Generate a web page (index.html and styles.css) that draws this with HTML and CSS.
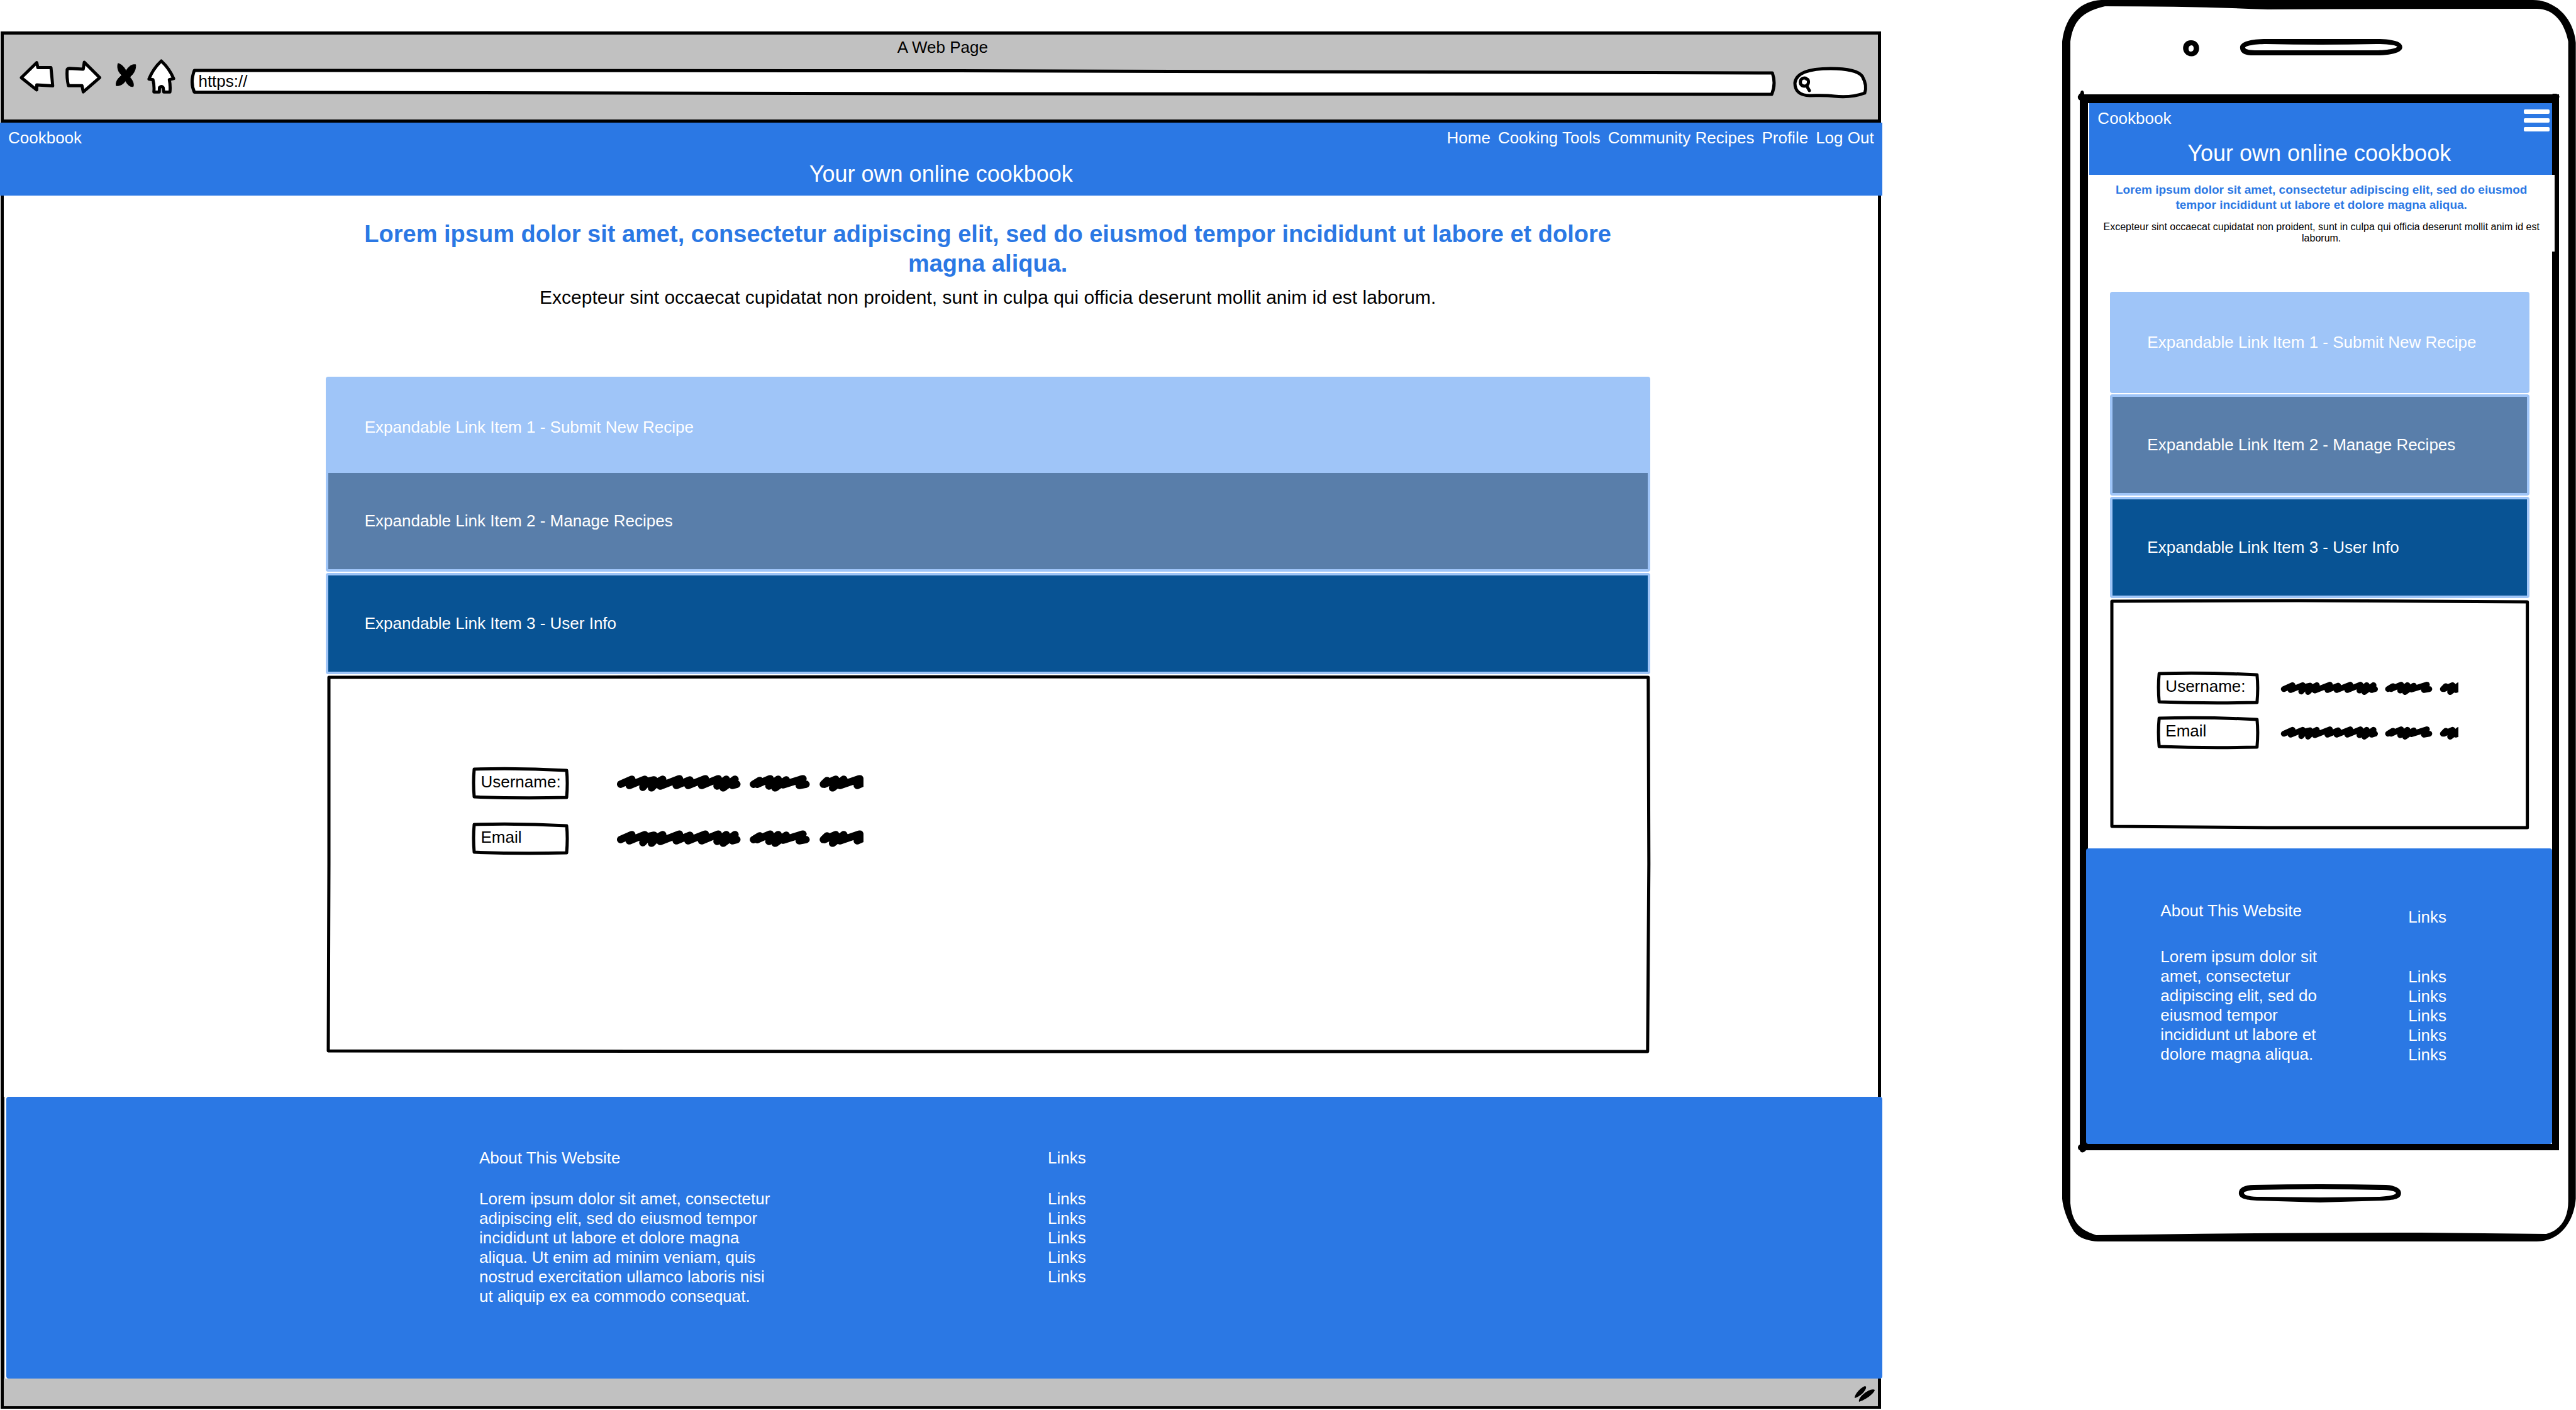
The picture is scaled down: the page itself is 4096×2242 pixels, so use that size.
FILE: index.html
```html
<!DOCTYPE html>
<html lang="en">
<head>
<meta charset="utf-8">
<title>Cookbook</title>
<link rel="stylesheet" href="styles.css">
</head>
<body>
<svg class="defs" aria-hidden="true">
  <symbol id="scribble" viewBox="0 0 400 27" preserveAspectRatio="xMinYMid slice">
    <path fill="none" stroke="#000" stroke-width="12" stroke-linecap="round" stroke-linejoin="round" d="M7 15L25 7 21 17 46 7 43 20 52 10 61 8 57 21 66 12 75 7 71 18 102 6 97 17 119 8 116 17 144 6 138 17 165 6 163 18 178 7 173 21 192 7 188 17 195 15M222 15L232 9 228 15 249 6 247 18 262 7 257 21 275 8 270 16 302 6 296 17 307 15M335 15L341 9 337 15 355 7 350 21 368 7 362 17 394 6 390 17 410 8"/>
  </symbol>
</svg>
<div class="mockups">
  <section class="browser">
    <div class="chrome">
      <div class="chrome-title">A Web Page</div>
      <div class="toolbar">
        <div class="toolbar-buttons">
          <button type="button" aria-label="Back"><svg class="icon-back" viewBox="28 94 69 58"><path d="M34 125L59 100.700L60.700 108.700L82 108.700L84.800 138.300L59 136.700V145Z"/></svg></button>
          <button type="button" aria-label="Forward"><svg class="icon-forward" viewBox="97 94 77 58"><path d="M108 112Q109 110 112 110L134 111.300L135.700 100L160.700 125L134 148L132 138H110Q107 125 108 112Z"/></svg></button>
          <button type="button" aria-label="Stop"><svg class="icon-stop" viewBox="174 94 56 58"><path d="M191 102C196 103 201 108 204 114C208 107 213 103 219.500 104C220 112 217 118 210 124C215 130 217 135 215.500 139.500C210 140 206 136 203 130C200 135 195 138.500 188 138C187 132 190 127 197 121C191 116 189 108 191 102Z"/></svg></button>
          <button type="button" aria-label="Home"><svg class="icon-home" viewBox="230 94 61 58"><path d="M260 98Q273 110 280 126.500L273 128.300Q275 138 274 148.300H264L263 141Q260 138 257 141L256.700 148.300H248Q249 138 246.500 128.300L240 127.300Q247 110 260 98Z"/></svg></button>
        </div>
        <div class="inked address">
          <svg class="ink" viewBox="0 0 2520 44" preserveAspectRatio="none" aria-hidden="true"><path d="M7 3L1200 3.500L2514 7Q2520 24 2513 41L1200 40L7 37.500Q0 22 7 3Z"/></svg>
          <input type="text" aria-label="Address" value="https://">
        </div>
        <div class="inked search">
          <svg class="ink" viewBox="0 0 119 50" preserveAspectRatio="none" aria-hidden="true"><path d="M27 46C10 46 3 38 3 26C5 8 30 3 60 3C85 3 104 7 110 15C115 24 117 34 114 42C100 47 85 49 66 47C50 45 40 46 27 46Z"/><path class="glass" d="M22 20C26 20 26 31 18 31C9 31 10 18 18 18Q21 18 22 20M22 31L26 38"/></svg>
          <input type="search" aria-label="Search">
        </div>
      </div>
    </div>

    <header class="site-header">
      <div class="bar">
        <a href="#" class="brand">Cookbook</a>
        <nav class="menu">
          <a href="#">Home</a>
          <a href="#">Cooking Tools</a>
          <a href="#">Community Recipes</a>
          <a href="#">Profile</a>
          <a href="#">Log Out</a>
        </nav>
      </div>
      <h1>Your own online cookbook</h1>
    </header>

    <main class="page">
      <div class="intro">
        <h2>Lorem ipsum dolor sit amet, consectetur adipiscing elit, sed do eiusmod tempor incididunt ut labore et dolore<br>magna aliqua.</h2>
        <p>Excepteur sint occaecat cupidatat non proident, sunt in culpa qui officia deserunt mollit anim id est laborum.</p>
      </div>
      <div class="accordion">
        <button type="button" class="item light">Expandable Link Item 1 - Submit New Recipe</button>
        <button type="button" class="item slate">Expandable Link Item 2 - Manage Recipes</button>
        <button type="button" class="item navy">Expandable Link Item 3 - User Info</button>
        <dl class="inked panel">
          <svg class="ink" viewBox="0 0 2105 601" preserveAspectRatio="none" aria-hidden="true"><path d="M5 3L1000 2L2102 3L2103 300L2101 599L900 599L4 598L5 300Z"/></svg>
          <div class="field">
            <dt class="inked"><svg class="ink" viewBox="0 0 153 52" preserveAspectRatio="none" aria-hidden="true"><path d="M3 3Q75 1 150 5Q152 25 150 49Q75 51 3 48Q1 25 3 3Z"/></svg><span>Username:</span></dt>
            <dd><svg class="scribble" viewBox="0 0 400 27" role="img" aria-label="Hidden user name"><use href="#scribble" width="400" height="27"/></svg></dd>
          </div>
          <div class="field">
            <dt class="inked"><svg class="ink" viewBox="0 0 153 52" preserveAspectRatio="none" aria-hidden="true"><path d="M3 3Q75 1 150 5Q152 25 150 49Q75 51 3 48Q1 25 3 3Z"/></svg><span>Email</span></dt>
            <dd><svg class="scribble" viewBox="0 0 400 27" role="img" aria-label="Hidden email"><use href="#scribble" width="400" height="27"/></svg></dd>
          </div>
        </dl>
      </div>
    </main>

    <div class="footer-frame">
      <footer class="site-footer">
        <div class="about">
          <h3>About This Website</h3>
          <p>Lorem ipsum dolor sit amet, consectetur adipiscing elit, sed do eiusmod tempor incididunt ut labore et dolore magna aliqua. Ut enim ad minim veniam, quis nostrud exercitation ullamco laboris nisi ut aliquip ex ea commodo consequat.</p>
        </div>
        <div class="links">
          <h3>Links</h3>
          <ul>
            <li><a href="#">Links</a></li>
            <li><a href="#">Links</a></li>
            <li><a href="#">Links</a></li>
            <li><a href="#">Links</a></li>
            <li><a href="#">Links</a></li>
          </ul>
        </div>
      </footer>
    </div>
    <div class="status-bar">
      <svg class="grip" viewBox="0 0 32 25" aria-hidden="true"><path d="M0 19C0 12 11 1 17 0C22 3 10 17 0 19ZM7 25C5 17 25 2 32 6C31 12 17 22 7 25Z"/></svg>
    </div>
  </section>

  <section class="phone">
    <svg class="phone-body" viewBox="0 0 817 1974" preserveAspectRatio="none" aria-hidden="true">
      <path fill-rule="evenodd" d="M0 66C4 30 25 2 62 0H749C785 0 814 30 817 68V1906C814 1945 790 1974 755 1974H68C45 1975 25 1970 17 1955C8 1940 1 1920 0 1906ZM13 66V1913C16 1945 28 1955 54 1964Q300 1960 570 1960L770 1962C795 1955 805 1935 805 1910V66C800 40 785 14 755 14Q543 14 327 15Q210 10 68 10C35 18 18 30 13 66Z"/>
      <path fill-rule="evenodd" d="M205 64C222 64 222 89 206 89.500C188 89 188 64 205 64ZM206 72C199 72 200 83 205 82C211 82 210 72 206 72Z"/>
      <path fill-rule="evenodd" d="M325 62H500C525 62 541 66 541 75C541 83 525 88 500 88H303C288 88 283 83 283 75C284 66 300 62 325 62ZM325 70C305 70 291 73 291 76C292 79 300 80 310 80H500C515 80 533 77 533 74C528 71 515 70 500 70Q410 72 325 70Z"/>
      <path fill-rule="evenodd" d="M305 1884Q410 1882 515 1884C530 1885 539 1890 539 1897C539 1906 530 1908 510 1909L410 1912L310 1909C290 1908 281 1905 281 1897C281 1889 290 1884 305 1884ZM305 1892C295 1893 289 1895 289 1897C290 1901 300 1903 315 1903L410 1904L505 1903C520 1902 531 1900 531 1897C531 1894 520 1892 505 1892Q410 1890 305 1892Z"/>
      <path d="M25 153Q27 149 29 148C29 143 35 142 35 150V160H29Q24 158 25 153ZM786 149Q794 152 789 158H780V149ZM25 1824Q26 1820 29 1820H38V1829Q31 1836 28 1829Q25 1828 25 1824Z"/>
    </svg>
    <div class="screen">
      <header class="site-header">
        <div class="bar">
          <a href="#" class="brand">Cookbook</a>
          <button type="button" class="hamburger" aria-label="Menu"><span></span><span></span><span></span></button>
        </div>
        <h1>Your own online cookbook</h1>
      </header>
      <div class="intro">
        <h2>Lorem ipsum dolor sit amet, consectetur adipiscing elit, sed do eiusmod<br>tempor incididunt ut labore et dolore magna aliqua.</h2>
        <p>Excepteur sint occaecat cupidatat non proident, sunt in culpa qui officia deserunt mollit anim id est<br>laborum.</p>
      </div>
      <div class="accordion">
        <button type="button" class="item light">Expandable Link Item 1 - Submit New Recipe</button>
        <button type="button" class="item slate">Expandable Link Item 2 - Manage Recipes</button>
        <button type="button" class="item navy">Expandable Link Item 3 - User Info</button>
        <dl class="inked panel">
          <svg class="ink" viewBox="0 0 667 365" preserveAspectRatio="none" aria-hidden="true"><path d="M3 3L300 2L664 4V180L664 363L250 363L3 361Z"/></svg>
          <div class="field">
            <dt class="inked"><svg class="ink" viewBox="0 0 153 52" preserveAspectRatio="none" aria-hidden="true"><path d="M3 3Q75 1 150 5Q152 25 150 49Q75 51 3 48Q1 25 3 3Z"/></svg><span>Username:</span></dt>
            <dd><svg class="scribble" viewBox="0 0 367 27" role="img" aria-label="Hidden user name"><use href="#scribble" width="400" height="27"/></svg></dd>
          </div>
          <div class="field">
            <dt class="inked"><svg class="ink" viewBox="0 0 153 52" preserveAspectRatio="none" aria-hidden="true"><path d="M3 3Q75 1 150 5Q152 25 150 49Q75 51 3 48Q1 25 3 3Z"/></svg><span>Email</span></dt>
            <dd><svg class="scribble" viewBox="0 0 367 27" role="img" aria-label="Hidden email"><use href="#scribble" width="400" height="27"/></svg></dd>
          </div>
        </dl>
      </div>
      <footer class="site-footer">
        <div class="about">
          <h3>About This Website</h3>
          <p>Lorem ipsum dolor sit amet, consectetur adipiscing elit, sed do eiusmod tempor incididunt ut labore et dolore magna aliqua.</p>
        </div>
        <div class="links">
          <h3>Links</h3>
          <ul>
            <li><a href="#">Links</a></li>
            <li><a href="#">Links</a></li>
            <li><a href="#">Links</a></li>
            <li><a href="#">Links</a></li>
            <li><a href="#">Links</a></li>
          </ul>
        </div>
      </footer>
    </div>
  </section>
</div>
</body>
</html>
```
FILE: styles.css
```css
* { box-sizing: border-box; }

body, h1, h2, h3, p, ul, dl, dd { margin: 0; padding: 0; }

body {
  background: #fff;
  color: #000;
  font: 26px/31px "Liberation Sans", Arial, sans-serif;
}

a { color: inherit; text-decoration: none; }
ul { list-style: none; }
h1, h3 { font-weight: 400; }
h3 { font-size: 26px; }
button, input { font: inherit; color: inherit; padding: 0; border: 0; background: none; }
.defs { display: none; }

.mockups {
  display: grid;
  grid-template-columns: 2994fr 817fr;
  column-gap: 7%;
  align-items: start;
}

/* Hand-drawn outlines, stretched behind the box they belong to */
.inked { position: relative; }
.ink { position: absolute; inset: 0; width: 100%; height: 100%; overflow: visible; }
.ink path { fill: #fff; stroke: #000; stroke-width: 5px; stroke-linejoin: round; vector-effect: non-scaling-stroke; }
.ink .glass { stroke-linecap: round; }

/* Browser window */
.browser { padding-top: 50px; }

.chrome {
  margin: 0 2px 0 1px;
  padding: 5px 16px 34px 22px;
  background: #c1c1c1;
  border: 5px solid #000;
}
.chrome-title { text-align: center; line-height: 30px; }
.toolbar { display: flex; align-items: flex-start; padding-top: 3px; }
.toolbar-buttons { display: flex; margin-right: 16px; }
.toolbar-buttons svg { display: block; height: 57px; }
.toolbar-buttons path { fill: #fff; stroke: #000; stroke-width: 5; stroke-linejoin: round; }
.toolbar-buttons .icon-stop path { fill: #000; stroke-width: 1; }
.address { flex: 1; height: 44px; margin: 16px 26px 0 0; }
.address input { position: relative; display: block; width: 100%; height: 40px; padding-left: 13px; }
.search { width: 119px; height: 50px; margin-top: 13px; }
.search input { position: relative; display: block; width: 100%; height: 50px; padding: 0 12px 0 32px; }

.site-header { padding: 9px 13px 14px; background: #2b78e4; color: #fff; }
.bar { display: flex; justify-content: space-between; }
.menu { display: flex; gap: 12px; }
h1 { margin-top: 22px; text-align: center; font-size: 36px; line-height: 40px; }

.page {
  margin: 0 2px 0 1px;
  padding: 38px 12.1% 70px 17.1%;
  border: solid #000;
  border-width: 0 5px;
}
.intro { text-align: center; }
.intro h2 { color: #2b78e4; font-size: 38px; line-height: 47px; white-space: nowrap; }
.intro p { margin-top: 12px; font-size: 30px; line-height: 36px; white-space: nowrap; }

.accordion { display: flex; flex-direction: column; gap: 2px; margin-top: 108px; }
.item {
  height: 161px;
  padding: 0 58px;
  border: 4px solid #9fc5f8;
  border-radius: 4px;
  color: #fff;
  text-align: left;
}
.light { background: #9fc5f8; }
.slate { background: #597eaa; }
.navy { background: #085394; }
.page .light { margin-bottom: -14px; }

.panel { display: flex; flex-direction: column; gap: 37px; padding: 146px 11.1% 315px; }
.field { position: relative; display: flex; align-items: center; gap: 76px; }
.field dt { width: 153px; height: 51px; padding: 8px 13px 0; }
.field dt span { position: relative; }
.scribble { display: block; width: 393px; height: 27px; }

.footer-frame { margin-left: 1px; padding-left: 3px; border-left: 6px solid #000; }
.site-footer { display: flex; padding: 82px 0 115px 752px; background: #2b78e4; color: #fff; border-radius: 4px; }
.site-header + .page, .site-header { border-radius: 0; }
.about { flex: none; width: 480px; margin-right: 424px; }
.site-footer h3 { margin-bottom: 34px; }

.status-bar {
  display: flex;
  justify-content: flex-end;
  margin: 0 2px 0 1px;
  padding: 12px 5px 7px;
  background: #c1c1c1;
  border: solid #000;
  border-width: 0 5px 4px;
}
.grip { width: 32px; height: 25px; }

/* Phone */
.phone { position: relative; padding: 150px 27px 145px 28px; }
.phone-body { position: absolute; inset: 0; width: 100%; height: 100%; }
.screen { position: relative; border: solid #000; border-width: 14px 11px 10px 13px; background: #fff; }
.screen .site-header { margin-left: 2px; padding-right: 4px; }
.screen h1 { margin-top: 20px; padding-right: 14px; }
.hamburger { display: flex; flex-direction: column; gap: 7px; height: 31px; padding-top: 1px; }
.hamburger span { flex: none; width: 41px; height: 7px; border-radius: 2px; background: #fff; }

.screen .intro { margin-right: -4px; padding: 12px 0 12px; background: #fff; }
.screen h2 { font-size: 19px; line-height: 24px; }
.screen .intro p { margin-top: 14px; font-size: 16px; line-height: 18px; }
.screen .accordion { margin: 64px 36px 31px 35px; }
.screen .item { padding: 0 55px; }
.screen .panel { gap: 19px; padding: 115px 75px 127px; }
.screen .field { gap: 34px; }
.screen .field dt { width: 162px; height: 52px; }
.screen .scribble { width: 283px; height: 21px; }
.screen .site-footer { margin-left: -3px; padding: 84px 0 126px 118px; }
.screen .about { width: 264px; margin-right: 130px; }
.screen .about h3 { margin-bottom: 42px; }
.screen .links { padding-top: 10px; }
.screen .links h3 { margin-bottom: 64px; }
```
